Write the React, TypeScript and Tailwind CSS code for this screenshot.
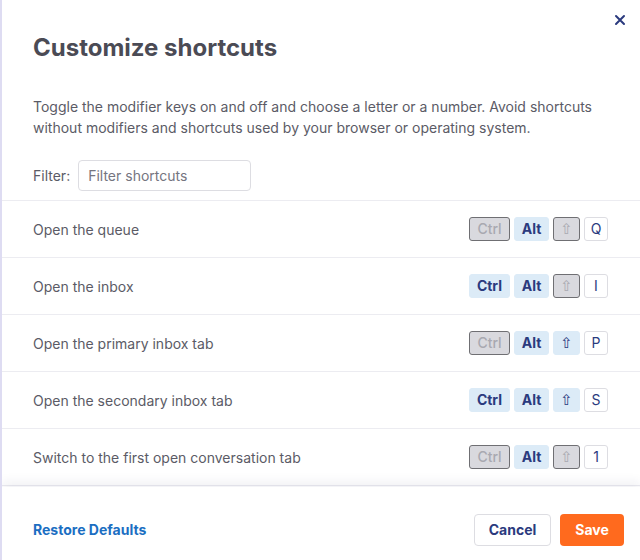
import React, { useState } from 'react';

type Mod = 'ctrl' | 'alt' | 'shift';

interface Shortcut {
  id: string;
  label: string;
  mods: Mod[];
  key: string;
}

const shortcuts: Shortcut[] = [
  { id: 'queue', label: 'Open the queue', mods: ['alt'], key: 'Q' },
  { id: 'inbox', label: 'Open the inbox', mods: ['ctrl', 'alt'], key: 'I' },
  { id: 'primary', label: 'Open the primary inbox tab', mods: ['alt', 'shift'], key: 'P' },
  { id: 'secondary', label: 'Open the secondary inbox tab', mods: ['ctrl', 'alt', 'shift'], key: 'S' },
  { id: 'first-tab', label: 'Switch to the first open conversation tab', mods: ['alt'], key: '1' },
];

const ModKey: React.FC<{ on: boolean; width: string; bold?: boolean; children: React.ReactNode }> = ({
  on,
  width,
  bold = true,
  children,
}) => (
  <button
    className={
      on
        ? `${width} h-[24px] rounded-[3px] border border-[#dcebf7] bg-[#dcebf7] text-[#2b3a7e] ${bold ? 'font-bold' : 'font-normal'} text-[14px] leading-none flex items-center justify-center`
        : `${width} h-[24px] rounded-[3px] border border-[#6f6f73] bg-[#d9d9de] text-[#a9a9b1] ${bold ? 'font-medium' : 'font-normal'} text-[14px] leading-none flex items-center justify-center`
    }
  >
    {children}
  </button>
);

const ShortcutRow: React.FC<{ item: Shortcut }> = ({ item }) => {
  const has = (m: Mod) => item.mods.includes(m);
  return (
    <div className="h-[57px] border-b border-[#ececf1] flex items-center justify-between pl-[31px] pr-[32px]">
      <span className="text-[14px] text-[#5b5b66]">{item.label}</span>
      <div className="flex items-center gap-[4px]">
        <ModKey on={has('ctrl')} width="w-[41px]">Ctrl</ModKey>
        <ModKey on={has('alt')} width="w-[35px]">Alt</ModKey>
        <ModKey on={has('shift')} width="w-[27px]" bold={false}>
          <span style={{ fontFamily: '"DejaVu Sans", sans-serif' }} className="text-[15px] leading-none">
            ⇧
          </span>
        </ModKey>
        <div className="w-[24px] h-[24px] rounded-[3px] border border-[#dddde2] bg-white text-[#2b3a7e] text-[14px] leading-none flex items-center justify-center">
          {item.key}
        </div>
      </div>
    </div>
  );
};

const App: React.FC = () => {
  const [filter, setFilter] = useState('');
  const visible = shortcuts.filter((s) => s.label.toLowerCase().includes(filter.toLowerCase()));

  return (
    <div
      className="w-[640px] h-[560px] bg-white border-l-2 border-[#dedcf2] flex flex-col overflow-hidden relative"
      style={{ fontFamily: 'Inter, "Noto Sans", sans-serif' }}
    >
      <button className="absolute top-[14px] right-[14px] text-[#2b3a7e]" aria-label="Close">
        <svg width="12" height="12" viewBox="0 0 12 12" fill="none" stroke="currentColor" strokeWidth="2" strokeLinecap="round">
          <path d="M2 2l8 8M10 2l-8 8" />
        </svg>
      </button>

      <div className="pl-[31px] pt-[33px]">
        <h1 className="text-[24px] font-bold text-[#4b4b55] leading-[30px]">Customize shortcuts</h1>
        <p className="mt-[33px] text-[14px] leading-[21px] text-[#5b5b66] pr-[40px]">
          Toggle the modifier keys on and off and choose a letter or a number. Avoid shortcuts without modifiers and
          shortcuts used by your browser or operating system.
        </p>
        <div className="mt-[22px] mb-[9px] flex items-center gap-[8px]">
          <label className="text-[14px] text-[#5b5b66]">Filter:</label>
          <input
            value={filter}
            onChange={(e) => setFilter(e.target.value)}
            placeholder="Filter shortcuts"
            className="w-[173px] h-[31px] rounded-[4px] border border-[#dddde2] px-[9px] text-[14px] text-[#5b5b66] placeholder:text-[#75757f] outline-none"
          />
        </div>
      </div>

      <div className="flex-1 overflow-hidden border-t border-[#ececf1]">
        {visible.map((s) => (
          <ShortcutRow key={s.id} item={s} />
        ))}
      </div>

      <div className="h-[73px] shrink-0 flex items-center justify-between pt-[13px] pl-[31px] pr-[16px] shadow-[0_-6px_10px_rgba(40,40,90,0.06)] relative bg-white">
        <button className="text-[14px] leading-[20px] font-bold text-[#1b6ec2]">Restore Defaults</button>
        <div className="flex items-center gap-[9px]">
          <button className="w-[77px] h-[32px] rounded-[4px] border border-[#dddde2] bg-white text-[14px] leading-[20px] font-bold text-[#2b3a7e]">
            Cancel
          </button>
          <button className="w-[64px] h-[32px] rounded-[4px] bg-[#ff6a1e] text-[14px] leading-[20px] font-bold text-white">
            Save
          </button>
        </div>
      </div>
    </div>
  );
};

export default App;
